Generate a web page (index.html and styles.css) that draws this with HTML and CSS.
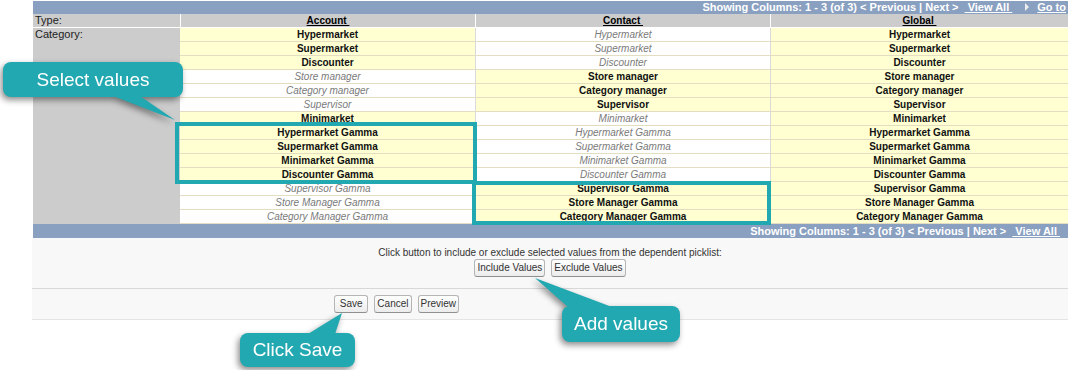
FILE: index.html
```html
<!DOCTYPE html>
<html lang="en">
<head>
    <meta charset="UTF-8">
    <meta name="viewport" content="width=device-width, initial-scale=1.0">
    <title>Field Dependency Matrix</title>
    <link rel="stylesheet" href="styles.css">
</head>
<body>
    <div class="page">
        <div class="nav-bar top-bar">
            Showing Columns: 1 - 3 (of 3) &lt; Previous | Next &gt; <a class="nav-link">&nbsp;View All&nbsp;</a><span class="nav-arrow"></span><a class="nav-link">Go to</a>
        </div>

        <table class="matrix">
            <colgroup>
                <col class="label-col">
                <col class="value-col">
                <col class="value-col">
                <col class="last-col">
            </colgroup>
            <tr>
                <th class="row-label">Type:</th>
                <th><span class="col-link">Account&nbsp;</span></th>
                <th><span class="col-link">Contact&nbsp;</span></th>
                <th><span class="col-link">Global&nbsp;</span></th>
            </tr>
            <tr>
                <td class="row-label" rowspan="14">Category:</td>
                <td class="on">Hypermarket</td>
                <td class="off">Hypermarket</td>
                <td class="on">Hypermarket</td>
            </tr>
            <tr>
                <td class="on">Supermarket</td>
                <td class="off">Supermarket</td>
                <td class="on">Supermarket</td>
            </tr>
            <tr>
                <td class="on">Discounter</td>
                <td class="off">Discounter</td>
                <td class="on">Discounter</td>
            </tr>
            <tr>
                <td class="off">Store manager</td>
                <td class="on">Store manager</td>
                <td class="on">Store manager</td>
            </tr>
            <tr>
                <td class="off">Category manager</td>
                <td class="on">Category manager</td>
                <td class="on">Category manager</td>
            </tr>
            <tr>
                <td class="off">Supervisor</td>
                <td class="on">Supervisor</td>
                <td class="on">Supervisor</td>
            </tr>
            <tr>
                <td class="on">Minimarket</td>
                <td class="off">Minimarket</td>
                <td class="on">Minimarket</td>
            </tr>
            <tr>
                <td class="on">Hypermarket Gamma</td>
                <td class="off">Hypermarket Gamma</td>
                <td class="on">Hypermarket Gamma</td>
            </tr>
            <tr>
                <td class="on">Supermarket Gamma</td>
                <td class="off">Supermarket Gamma</td>
                <td class="on">Supermarket Gamma</td>
            </tr>
            <tr>
                <td class="on">Minimarket Gamma</td>
                <td class="off">Minimarket Gamma</td>
                <td class="on">Minimarket Gamma</td>
            </tr>
            <tr>
                <td class="on">Discounter Gamma</td>
                <td class="off">Discounter Gamma</td>
                <td class="on">Discounter Gamma</td>
            </tr>
            <tr>
                <td class="off">Supervisor Gamma</td>
                <td class="on">Supervisor Gamma</td>
                <td class="on">Supervisor Gamma</td>
            </tr>
            <tr>
                <td class="off">Store Manager Gamma</td>
                <td class="on">Store Manager Gamma</td>
                <td class="on">Store Manager Gamma</td>
            </tr>
            <tr>
                <td class="off">Category Manager Gamma</td>
                <td class="on">Category Manager Gamma</td>
                <td class="on">Category Manager Gamma</td>
            </tr>
        </table>

        <div class="nav-bar bottom-bar">
            Showing Columns: 1 - 3 (of 3) &lt; Previous | Next &gt; <a class="nav-link">&nbsp;View All&nbsp;</a>
        </div>

        <div class="picklist-actions">
            <p>Click button to include or exclude selected values from the dependent picklist:</p>
            <div class="action-buttons">
                <button class="btn">Include Values</button>
                <button class="btn">Exclude Values</button>
            </div>
        </div>

        <div class="form-buttons">
            <button class="btn">&nbsp;Save&nbsp;</button>
            <button class="btn">Cancel</button>
            <button class="btn">Preview</button>
        </div>
    </div>

    <!-- highlight frames -->
    <div class="highlight highlight-account"></div>
    <div class="highlight highlight-contact"></div>

    <!-- tutorial callouts -->
    <div class="callout callout-select">
        <svg class="pointer"><polygon points="110,34 137,34 172,58"></polygon></svg>
        Select values
    </div>
    <div class="callout callout-add">
        <svg class="pointer"><polygon points="-27,-28 6,1 50,1"></polygon></svg>
        Add values
    </div>
    <div class="callout callout-save">
        <svg class="pointer"><polygon points="102,-20 68,1 95,1"></polygon></svg>
        Click Save
    </div>
</body>
</html>
```

FILE: styles.css
```css
body {
    margin: 0;
    width: 1068px;
    height: 370px;
    overflow: hidden;
    position: relative;
    font-family: "Liberation Sans", Arial, sans-serif;
    background-color: #fff;
}
.page {
    margin: 1px 0 0 33px;
    width: 1035px;
}
.nav-bar {
    background-color: #8aa0c0;
    color: #fff;
    font-size: 11px;
    font-weight: bold;
    text-align: right;
    white-space: nowrap;
    overflow: hidden;
}
.top-bar {
    height: 13px;
    line-height: 13px;
    padding-right: 2px;
}
.bottom-bar {
    height: 14px;
    line-height: 14px;
    padding-right: 8px;
}
.nav-link {
    text-decoration: underline;
    margin-left: 3px;
}
.nav-arrow {
    display: inline-block;
    width: 0;
    height: 0;
    margin: 0 8px 0 13px;
    border-top: 4px solid transparent;
    border-bottom: 4px solid transparent;
    border-left: 4px solid #eee;
    vertical-align: 0;
}
.top-bar .nav-arrow + .nav-link {
    margin-left: 0;
}
.matrix {
    border-collapse: separate;
    border-spacing: 0;
    table-layout: fixed;
    width: 1035px;
    font-size: 10px;
}
.label-col {
    width: 147px;
}
.value-col {
    width: 295px;
}
.last-col {
    width: 298px;
}
.matrix th {
    background-color: #ccc;
    padding: 0;
    line-height: 13px;
    border-bottom: 1px solid #fff;
    color: #000;
}
.matrix th + th {
    border-left: 1px solid #fff;
}
.col-link {
    text-decoration: underline;
}
.matrix td {
    padding: 0;
    line-height: 13px;
    text-align: center;
    white-space: nowrap;
    border-bottom: 1px solid #e4ddc2;
}
.matrix td:nth-last-child(-n+2) {
    border-left: 1px solid #dadada;
}
.matrix .row-label {
    background-color: #ccc;
    text-align: left;
    vertical-align: top;
    padding-left: 2px;
    font-size: 11px;
    font-weight: normal;
    color: #222;
}
.matrix td.row-label {
    border-bottom: none;
}
.on {
    background-color: #ffffd2;
    font-weight: bold;
    color: #111;
}
.off {
    background-color: #fff;
    font-style: italic;
    color: #7a7a7a;
}
.picklist-actions {
    margin-left: -1px;
    background-color: #f8f8f8;
    padding: 9px 0 11px;
    text-align: center;
    border-bottom: 1px solid #d8d8d8;
    font-size: 10px;
    color: #333;
}
.picklist-actions p {
    margin: 0;
    line-height: 12px;
}
.action-buttons {
    display: flex;
    justify-content: center;
    gap: 6px;
}
.form-buttons {
    margin-left: -1px;
    background-color: #f8f8f8;
    padding: 6px 0 6px 302px;
    display: flex;
    gap: 6px;
    border-bottom: 1px solid #e4e4e4;
}
.btn {
    box-sizing: border-box;
    height: 18px;
    margin: 0;
    padding: 2px;
    font-family: inherit;
    font-size: 10px;
    line-height: 12px;
    color: #333;
    border: 1px solid #b5b5b5;
    border-bottom-color: #8f8f8f;
    border-radius: 3px;
    background: linear-gradient(#ffffff, #ececec);
}
.highlight {
    position: absolute;
    border: 4px solid #21a8b0;
}
.highlight-account {
    left: 175px;
    top: 122px;
    width: 294px;
    height: 54px;
}
.highlight-contact {
    left: 472px;
    top: 181px;
    width: 291px;
    height: 36px;
}
.callout {
    position: absolute;
    background-color: #21a8b0;
    color: #fff;
    font-size: 19px;
    text-align: center;
    border-radius: 8px;
    filter: drop-shadow(-2px 3px 3px rgba(0, 0, 0, 0.45));
}
.pointer {
    position: absolute;
    left: 0;
    top: 0;
    width: 1px;
    height: 1px;
    overflow: visible;
}
.pointer polygon {
    fill: #21a8b0;
}
.callout-select {
    left: 3px;
    top: 62px;
    width: 180px;
    height: 35px;
    line-height: 35px;
}
.callout-add {
    left: 562px;
    top: 306px;
    width: 118px;
    height: 36px;
    line-height: 36px;
}
.callout-save {
    left: 240px;
    top: 333px;
    width: 115px;
    height: 34px;
    line-height: 34px;
}
```
